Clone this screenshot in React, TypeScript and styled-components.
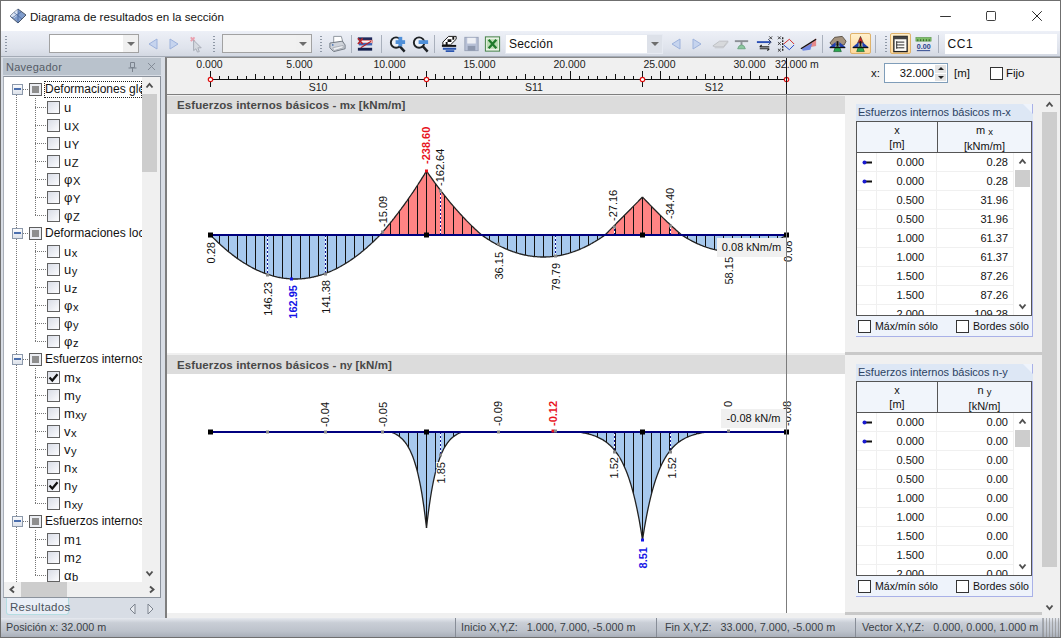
import React from 'react';
import styled, { createGlobalStyle } from 'styled-components';
import { Minus, Square, X } from 'lucide-react';

const GlobalStyle = createGlobalStyle`
  html, body {
    margin: 0;
    padding: 0;
    overflow: hidden;
    background: #f0f0f0;
  }
  * { box-sizing: border-box; }
`;

const FONT = '"Liberation Sans", Arial, sans-serif';

const Window = styled.div`
  width: 1061px;
  height: 638px;
  display: flex;
  flex-direction: column;
  border: 1px solid #6f6f6f;
  border-bottom: none;
  font-family: ${FONT};
  color: #111;
  background: #f0f0f0;
  overflow: hidden;
`;

const TitleBar = styled.div`
  height: 30px;
  flex: none;
  display: flex;
  align-items: center;
  background: #fff;
  padding-left: 8px;
`;

const TitleText = styled.span`
  font-size: 11.6px;
  margin-left: 3px;
  flex: 1;
`;

const WinButton = styled.div`
  width: 46px;
  height: 30px;
  display: flex;
  align-items: center;
  justify-content: center;
  color: #111;
`;

const Toolbar = styled.div`
  height: 26px;
  flex: none;
  display: flex;
  align-items: center;
  padding-left: 3px;
  background: linear-gradient(#edf0f7, #dfe3ec 70%, #d3d8e2);
  border-bottom: 1px solid #a4abb6;
`;

const Grip = styled.div<{ $ml?: number }>`
  width: 3px;
  height: 16px;
  flex: none;
  margin-left: ${p => p.$ml ?? 0}px;
  background: linear-gradient(#8f98a6 50%, transparent 50%) 0 0 / 2px 3px repeat-y;
`;

const ToolSep = styled.div<{ $ml?: number }>`
  width: 1px;
  height: 18px;
  flex: none;
  margin-left: ${p => p.$ml ?? 0}px;
  background: #a9b0bc;
`;

const ToolBtn = styled.div<{ $ml?: number; $active?: boolean }>`
  width: 21px;
  height: 21px;
  flex: none;
  margin-left: ${p => p.$ml ?? 0}px;
  display: flex;
  align-items: center;
  justify-content: center;
  border-radius: 2px;
  border: 1px solid ${p => (p.$active ? '#dfb26a' : 'transparent')};
  background: ${p => (p.$active ? 'linear-gradient(#fff0cc, #ffd99a)' : 'transparent')};
`;

const Combo = styled.div<{ $w: number; $ml?: number; $grey?: boolean; $flat?: boolean }>`
  width: ${p => p.$w}px;
  height: ${p => (p.$flat ? 20 : 19)}px;
  flex: none;
  margin-left: ${p => p.$ml ?? 0}px;
  display: flex;
  align-items: center;
  background: ${p => (p.$grey ? '#f1f1f1' : '#fff')};
  border: 1px solid ${p => (p.$flat ? '#e6eaf2' : '#a2a2a2')};
  font-size: 12px;
  padding-left: ${p => (p.$flat ? 3 : 0)}px;
`;

const ComboText = styled.span`
  flex: 1;
  letter-spacing: 0.2px;
`;

const ComboArrow = styled.div<{ $dark?: boolean }>`
  width: 15px;
  align-self: stretch;
  display: flex;
  align-items: center;
  justify-content: center;
  background: ${p => (p.$dark ? '#dde1e9' : '#f0f0f0')};
  &::after {
    content: '';
    border: 4px solid transparent;
    border-top-color: #6d6d6d;
    border-bottom: none;
  }
`;

const ToolField = styled.div<{ $ml?: number }>`
  width: 112px;
  height: 20px;
  flex: none;
  margin-left: ${p => p.$ml ?? 0}px;
  background: #fff;
  font-size: 12px;
  letter-spacing: 0.6px;
  padding: 3px 0 0 3px;
`;

const Body = styled.div`
  flex: 1;
  display: flex;
  min-height: 0;
`;

const NavPanel = styled.div`
  width: 164px;
  flex: none;
  display: flex;
  flex-direction: column;
  background: #d8dde5;
  padding-top: 1px;
  padding-left: 2px;
`;

const NavHeader = styled.div`
  width: 158px;
  height: 17px;
  flex: none;
  display: flex;
  align-items: center;
  background: #b9c2cc;
  color: #555c66;
  font-size: 11px;
  letter-spacing: 0.25px;
  padding-left: 3px;
`;

const NavTitle = styled.span`
  flex: 1;
`;

const NavIcon = styled.span`
  width: 19px;
  display: flex;
  justify-content: center;
  color: #7b838e;
`;

const NavFrame = styled.div`
  width: 158px;
  height: 522px;
  flex: none;
  margin-top: 1px;
  display: flex;
  flex-direction: column;
  border: 1px solid #8b929c;
  border-left-color: #a9afb8;
  background: #f0f0f0;
`;

const NavTop = styled.div`
  flex: 1;
  display: flex;
  min-height: 0;
`;

const Tree = styled.div`
  width: 138px;
  flex: none;
  overflow: hidden;
  padding-top: 3px;
  background:
    linear-gradient(#fff, #fff) 12px 0 / 1px 12px no-repeat,
    linear-gradient(#777 50%, transparent 50%) 12px 0 / 1px 2px repeat-y,
    #fff;
`;

const GroupRow = styled.div`
  height: 18px;
  display: flex;
  align-items: center;
  padding-left: 8px;
`;

const Expander = styled.div`
  width: 11px;
  height: 11px;
  flex: none;
  background: linear-gradient(#fafbfd, #dde2ea);
  border: 1px solid #8c99ab;
  display: flex;
  align-items: center;
  justify-content: center;
  &::after {
    content: '';
    width: 7px;
    height: 2px;
    background: #4b6fae;
  }
`;

const DotStub = styled.div<{ $w: number }>`
  width: ${p => p.$w}px;
  height: 1px;
  flex: none;
  background: linear-gradient(to right, #777 50%, transparent 50%) 0 0 / 2px 1px repeat-x;
`;

const GroupBox = styled.div`
  width: 13px;
  height: 13px;
  flex: none;
  border: 1px solid #5e5e5e;
  background: #eceef3;
  display: flex;
  align-items: center;
  justify-content: center;
  &::after {
    content: '';
    width: 7px;
    height: 7px;
    background: #8e8e8e;
  }
`;

const GroupLabel = styled.div<{ $focus?: boolean }>`
  flex: 1;
  min-width: 0;
  height: 17px;
  margin-left: 2px;
  padding: 1px 0 0 1px;
  font-size: 12px;
  white-space: nowrap;
  overflow: hidden;
  outline: ${p => (p.$focus ? '1px dotted #222' : 'none')};
  outline-offset: -1px;
`;

const ChildRow = styled.div`
  height: 18px;
  display: flex;
  align-items: center;
  padding-left: 31px;
`;

const Elbow = styled.div<{ $last?: boolean }>`
  width: 12px;
  align-self: stretch;
  flex: none;
  background: linear-gradient(to right, #777 50%, transparent 50%) 0 50% / 2px 1px repeat-x;
  &::before {
    content: '';
    display: block;
    width: 1px;
    height: ${p => (p.$last ? '50%' : '100%')};
    background: linear-gradient(#777 50%, transparent 50%) 0 0 / 1px 2px repeat-y;
  }
`;

const TreeCheck = styled.div`
  width: 13px;
  height: 13px;
  flex: none;
  border: 1px solid #626262;
  background: linear-gradient(135deg, #d9dde7, #fcfcfe);
  display: flex;
  align-items: center;
  justify-content: center;
`;

const ChildLabel = styled.span`
  margin-left: 4px;
  font-size: 13px;
  letter-spacing: 0.5px;
  white-space: nowrap;
`;

const Sub = styled.span`
  font-size: 0.86em;
  vertical-align: -1px;
  letter-spacing: 0;
`;

const VScroll = styled.div`
  width: 15px;
  flex: none;
  display: flex;
  flex-direction: column;
  align-items: center;
  background: #f0f0f0;
`;

const ScrollArrow = styled.div<{ $h?: number }>`
  height: ${p => p.$h ?? 17}px;
  flex: none;
  display: flex;
  align-items: center;
  justify-content: center;
  width: 100%;
`;

const ScrollThumb = styled.div<{ $h: number }>`
  width: 100%;
  height: ${p => p.$h}px;
  flex: none;
  background: #cdcdcd;
`;

const ScrollFill = styled.div`
  flex: 1;
`;

const HScroll = styled.div`
  height: 15px;
  flex: none;
  display: flex;
  align-items: center;
  background: #f0f0f0;
`;

const HArrow = styled.div`
  width: 17px;
  flex: none;
  display: flex;
  justify-content: center;
`;

const HThumb = styled.div`
  width: 46px;
  height: 15px;
  background: #cdcdcd;
`;

const TabBar = styled.div`
  flex: 1;
  display: flex;
  align-items: flex-start;
  padding-left: 3px;
`;

const Tab = styled.div`
  width: 63px;
  height: 17px;
  font-size: 11.5px;
  letter-spacing: 0.3px;
  color: #4b525c;
  background: #e9eef6;
  border: 1px solid #b5dde2;
  border-top: none;
  border-radius: 0 0 3px 3px;
  padding-left: 3px;
  padding-top: 2px;
  line-height: 14px;
`;

const TabArrows = styled.div`
  margin-left: 59px;
  margin-top: 5px;
  display: flex;
  gap: 9px;
`;

const Main = styled.div`
  flex: 1;
  display: flex;
  flex-direction: column;
  min-width: 0;
  border-left: 2px solid #7e7e7e;
  border-top: 1px solid #8a8a8a;
`;

const RulerRow = styled.div`
  height: 37px;
  flex: none;
  display: flex;
  background: #f0f0f0;
  border-bottom: 1px solid #7f7f7f;
`;

const Controls = styled.div`
  flex: 1;
  display: flex;
  align-items: center;
  padding: 0 0 6px 26px;
  font-size: 11.5px;
`;

const ControlLabel = styled.span<{ $ml?: number }>`
  margin-left: ${p => p.$ml ?? 0}px;
`;

const XLabel = styled.span`
  width: 13px;
`;

const SpinInput = styled.div`
  width: 64px;
  height: 20px;
  display: flex;
  align-items: center;
  justify-content: flex-end;
  background: #fff;
  border: 1px solid #7f9db9;
  font-size: 11.2px;
`;

const Spin = styled.div`
  width: 11px;
  height: 16px;
  margin-left: 1px;
  margin-right: 1px;
  display: flex;
  flex-direction: column;
  gap: 1px;
`;

const SpinPart = styled.div<{ $down?: boolean }>`
  flex: 1;
  background: #e4e4e4;
  display: flex;
  align-items: center;
  justify-content: center;
  &::after {
    content: '';
    border: 3px solid transparent;
    ${p => (p.$down ? 'border-top-color: #222; border-bottom: none;' : 'border-bottom-color: #222; border-top: none;')}
  }
`;

const PlainCheck = styled.div<{ $ml?: number }>`
  width: 13px;
  height: 13px;
  flex: none;
  margin-left: ${p => p.$ml ?? 0}px;
  background: #fff;
  border: 1px solid #333;
`;

const Content = styled.div`
  flex: 1;
  display: flex;
  min-height: 0;
`;

const DiagramCol = styled.div`
  width: 678px;
  flex: none;
  position: relative;
  padding-top: 1px;
  background: #f0f0f0;
`;

const Section = styled.div`
  display: flex;
  flex-direction: column;
`;

const SectionHead = styled.div<{ $h: number }>`
  height: ${p => p.$h}px;
  background: #dcdcdc;
  color: #484848;
  font-size: 11.5px;
  font-weight: bold;
  letter-spacing: 0.1px;
  padding-left: 10px;
  display: flex;
  align-items: center;
  white-space: pre;
`;

const SectionBody = styled.div<{ $h: number; $mb?: number }>`
  height: ${p => p.$h}px;
  margin-bottom: ${p => p.$mb ?? 0}px;
  background: #fff;
  position: relative;
  overflow: hidden;
`;

const ChartSvg = styled.svg`
  display: block;
`;

const ChartLabel = styled.text<{ $color?: string; $bold?: boolean; $halo?: boolean }>`
  font-family: ${FONT};
  font-size: 11px;
  fill: ${p => p.$color ?? '#111'};
  font-weight: ${p => (p.$bold ? 'bold' : 'normal')};
  ${p => (p.$halo ? 'stroke: #fff; stroke-width: 2px; paint-order: stroke;' : '')}
`;

const RulerText = styled.text`
  font-family: ${FONT};
  font-size: 10.5px;
  fill: #222;
`;

const Tooltip = styled.div<{ $left: number; $top: number; $w: number }>`
  position: absolute;
  left: ${p => p.$left}px;
  top: ${p => p.$top}px;
  width: ${p => p.$w}px;
  height: 19px;
  background: #f0f0f0;
  font-size: 11px;
  text-align: center;
  line-height: 19px;
  white-space: nowrap;
`;

const CursorLine = styled.div`
  position: absolute;
  left: 619px;
  top: 0;
  bottom: 5px;
  width: 1px;
  background: #7c7c7c;
`;

const SideCol = styled.div`
  width: 197px;
  flex: none;
  display: flex;
  flex-direction: column;
`;

const SidePane = styled.div`
  height: 260px;
  flex: none;
  padding: 9px 0 0 11px;
  border-bottom: 3px solid #c9c9c9;
`;

const Card = styled.div`
  width: 177px;
  height: 233px;
  display: flex;
  flex-direction: column;
  background: #eef3fb;
  border-right: 1px solid #a9b1e8;
  border-bottom: 1px solid #a9b1e8;
`;

const CardTitle = styled.div`
  height: 17px;
  flex: none;
  margin-right: -1px;
  background: #dde7f5;
  clip-path: polygon(0 0, calc(100% - 10px) 0, 100% 10px, 100% 100%, 0 100%);
  color: #2b4262;
  font-size: 11px;
  padding: 2px 0 0 2px;
`;

const DataTable = styled.div`
  height: 195px;
  flex: none;
  display: flex;
  flex-direction: column;
  border: 1px solid #555;
  background: #fff;
`;

const TableHead = styled.div`
  height: 31px;
  flex: none;
  display: grid;
  grid-template-columns: 80px 1fr;
  background: #f1f5fb;
  border-bottom: 1px solid #555;
  font-size: 11px;
`;

const HeadCell = styled.div`
  text-align: center;
  line-height: 14px;
  padding-top: 1px;
  & + & { border-left: 1px solid #555; }
`;

const TableBody = styled.div`
  flex: 1;
  display: flex;
  min-height: 0;
`;

const Rows = styled.div`
  width: 157px;
  flex: none;
  overflow: hidden;
`;

const DataRow = styled.div`
  height: 19px;
  display: grid;
  grid-template-columns: 20px 60px 77px;
  border-bottom: 1px solid #f0f0f0;
  font-size: 11px;
  line-height: 18px;
`;

const MarkCell = styled.div`
  display: flex;
  align-items: center;
  justify-content: center;
  border-right: 1px solid #f0f0f0;
`;

const NumCell = styled.div<{ $pad: number }>`
  text-align: right;
  padding-right: ${p => p.$pad}px;
  border-right: 1px solid #f0f0f0;
`;

const MiniScroll = styled.div`
  flex: 1;
  display: flex;
  flex-direction: column;
  padding: 0 1px;
`;

const CardFooter = styled.div`
  flex: 1;
  display: flex;
  align-items: center;
  padding-left: 2px;
  font-size: 10.6px;
`;

const FooterItem = styled.label<{ $w: number }>`
  width: ${p => p.$w}px;
  display: flex;
  align-items: center;
  gap: 4px;
  white-space: nowrap;
`;

const PageScroll = styled.div`
  flex: 1;
  display: flex;
  flex-direction: column;
  padding-right: 3px;
  padding-top: 1px;
`;

const StatusBar = styled.div`
  height: 20px;
  flex: none;
  display: flex;
  background: linear-gradient(#e6e9ef, #c9ced6 25%, #bcc2cb 70%, #a9afb9);
  border-bottom: 1px solid #6f6f6f;
  font-size: 10.8px;
  color: #3a3f46;
  margin: 0 -1px;
`;

const StatusCell = styled.div<{ $w: number; $pad: number }>`
  width: ${p => p.$w}px;
  flex: none;
  padding: 3px 0 0 ${p => p.$pad}px;
  white-space: pre;
  & + & { border-left: 1px solid #878d97; }
`;

const GripDots = styled.div`
  flex: 1;
  border-left: 1px solid #878d97;
  background: linear-gradient(to right, #888 50%, transparent 50%) right bottom / 3px 3px;
  background-repeat: repeat;
  opacity: 0.6;
`;

const Chevron = ({ dir, size = 9 }: { dir: 'up' | 'down' | 'left' | 'right'; size?: number }) => {
  const pts = {
    up: '1.5,6.5 4.5,3 7.5,6.5',
    down: '1.5,2.5 4.5,6 7.5,2.5',
    left: '6,1.5 2.5,4.5 6,7.5',
    right: '3,1.5 6.5,4.5 3,7.5',
  }[dir];
  return (
    <svg width={size} height={size} viewBox="0 0 9 9">
      <polyline points={pts} fill="none" stroke="#505050" strokeWidth="1.9" />
    </svg>
  );
};

const Tri = ({ left, size = 16 }: { left?: boolean; size?: number }) => (
  <svg width={size} height={size} viewBox="0 0 16 16">
    <polygon points={left ? '12,3 12,13 4,8' : '4,3 4,13 12,8'} fill="#c6d4ee" stroke="#9db2dc" />
  </svg>
);

const OutlineTri = ({ left }: { left?: boolean }) => (
  <svg width="9" height="12" viewBox="0 0 9 12">
    <polygon points={left ? '7,1 7,11 2,6' : '2,1 2,11 7,6'} fill="#e8ebf0" stroke="#7c838e" />
  </svg>
);

const Ico = ({ children }: { children: React.ReactNode }) => (
  <svg width="20" height="20" viewBox="0 0 20 20">{children}</svg>
);

const AppIcon = () => (
  <svg width="18" height="16" viewBox="0 0 18 16">
    <polygon points="1,8 9,1 17,7 9,15" fill="#7f9ccb" stroke="#4b5668" />
    <polygon points="1,8 9,1 9,7 5,10" fill="#d8e2f2" />
    <path d="M5 4.5 L13 11 M9 1 L9 15 M3 10 L12 4" stroke="#3f5f95" strokeWidth="0.7" />
  </svg>
);

const PinIcon = () => (
  <Ico>
    <path d="M5 3 L9 7 M9 3 L5 7" stroke="#eaa0ae" strokeWidth="2" />
    <polygon points="8,6 16,14 12.5,14 14,18 12,18.5 10.5,15 8,17" fill="#d6dae0" stroke="#a5abb5" />
  </Ico>
);

const PrintIcon = () => (
  <Ico>
    <polygon points="6,2 14,2 16,9 6,9" fill="#fff" stroke="#8d939c" />
    <polygon points="2,9 15,7 18,11 18,15 6,18 2,14" fill="#cfd3da" stroke="#6f7680" />
    <polygon points="5,14 16,11.5 16,14 6,17" fill="#eef0f3" stroke="#8a909a" strokeWidth="0.6" />
    <circle cx="5" cy="11" r="0.9" fill="#4a75b5" />
  </Ico>
);

const StripesIcon = () => (
  <Ico>
    <rect x="2" y="3" width="15" height="3" fill="#1f2a5c" />
    <rect x="4" y="6" width="13" height="3" fill="#f5f5f5" stroke="#c33" strokeWidth="0.6" />
    <rect x="3" y="9" width="14" height="2.5" fill="#3c63b5" />
    <path d="M2 4 L7 10 M7 4 L2 10" stroke="#b5222a" strokeWidth="1.6" />
    <path d="M16 7 L5 14" stroke="#b5222a" strokeWidth="1.2" />
    <rect x="2" y="14" width="15" height="3" fill="#15214f" />
  </Ico>
);

const ZoomIcon = ({ plus }: { plus?: boolean }) => (
  <Ico>
    <circle cx="8.5" cy="8.5" r="5.5" fill="#eef2f8" stroke="#1e2226" strokeWidth="2" />
    <path d="M12.5 12.5 L17.5 18" stroke="#1e2226" strokeWidth="2.6" />
    <rect x="8" y="6" width="10" height="4" fill="#4f8fd8" />
    {plus && <rect x="11" y="2.5" width="4" height="10" fill="#4f8fd8" />}
  </Ico>
);

const CheckerIcon = () => (
  <Ico>
    <polygon points="3,8 9,2 17,2 17,5 11,11 3,11" fill="#fff" stroke="#111" />
    <path d="M6 8 h2 v3 h-2z M10 5 h2 v3 h-2z M13 2.5 h2 v3 h-2z M8 5 h2 v3 h-2z" fill="#111" />
    <rect x="2" y="11" width="15" height="2" fill="#111" />
    <path d="M3 15 H17 M6 17.5 H15" stroke="#2a55b0" strokeWidth="2" />
  </Ico>
);

const SaveIcon = () => (
  <Ico>
    <rect x="3" y="3" width="14" height="14" fill="#b7c0d6" stroke="#9aa3b8" />
    <rect x="5.5" y="3.5" width="9" height="6" fill="#eef0f5" />
    <rect x="6" y="12" width="8" height="5" fill="#8e98ae" />
  </Ico>
);

const ExcelIcon = () => (
  <Ico>
    <rect x="2.5" y="2.5" width="15" height="15" fill="#e9f3e6" stroke="#3f7d41" />
    <rect x="4" y="5" width="12" height="10" fill="#bcdcb5" />
    <path d="M6 5.5 L14 14.5 M14 5.5 L6 14.5" stroke="#1f7a2b" strokeWidth="2.4" />
  </Ico>
);

const PlateIcon = () => (
  <Ico>
    <polygon points="2,12 9,7 18,7 13,13 4,13" fill="#d7d9dc" stroke="#bdbfc3" />
    <path d="M4 14 L13 14 L18 8" stroke="#c4c6ca" fill="none" />
  </Ico>
);

const BellIcon = () => (
  <Ico>
    <rect x="3" y="6" width="14" height="2" fill="#8c9096" />
    <rect x="9" y="8" width="2" height="4" fill="#8c9096" />
    <path d="M6 15 Q7 11 10 11 Q13 11 14 15 Z" fill="#8cc7a0" stroke="#6fa884" />
  </Ico>
);

const SwapIcon = () => (
  <Ico>
    <path d="M2 8 H16" stroke="#2b4fb5" strokeWidth="2" />
    <path d="M14 5 L17 8 L14 11" fill="none" stroke="#1d2b55" />
    <path d="M15 2 l3 3 M18 2 l-3 3" stroke="#333" />
    <path d="M5 13 H15 M5 13 l2 -2 M15 15 H5 M15 15 l-2 2" stroke="#222" strokeWidth="1.3" fill="none" />
  </Ico>
);

const CrossLinesIcon = () => (
  <Ico>
    <path d="M1 2 l3 3 M4 2 l-3 3 M1 8 l3 3 M4 8 l-3 3 M1 15 l3 3 M4 15 l-3 3" stroke="#333" />
    <path d="M6 3 V17" stroke="#222" strokeDasharray="2 1" strokeWidth="1.4" />
    <path d="M7 10 L13 5 L18 10" stroke="#d32424" fill="none" />
    <path d="M7 11 L13 16 L18 11" stroke="#2448c8" fill="none" />
  </Ico>
);

const SlopeIcon = () => (
  <Ico>
    <polygon points="3,15 18,4 18,12" fill="#e58a8a" />
    <polygon points="3,15 14,9 12,16 4,17" fill="#6f86e0" />
    <path d="M2 15 L18 5" stroke="#111" strokeWidth="1.5" />
  </Ico>
);

const HouseIcon = ({ stone }: { stone?: boolean }) => (
  <Ico>
    {stone ? (
      <polygon points="2,9 7,3 15,2 19,7 17,11 4,11" fill="#a4937f" stroke="#5a5045" />
    ) : (
      <polygon points="10,2 13,9 7,9" fill="#d8261f" stroke="#222" strokeWidth="0.6" />
    )}
    <polygon points="1,14 8,8 8,13" fill="#1f3fb0" />
    <polygon points="19,14 12,8 12,13" fill="#1f3fb0" />
    <rect x="9" y="7" width="2" height="6" fill="#111" />
    <path d="M6 18 Q7 12.5 10 12.5 Q13 12.5 14 18 Z" fill="#2aa84e" stroke="#135c2a" strokeWidth="0.7" />
    <rect x="2" y="13" width="16" height="1.4" fill="#111" />
  </Ico>
);

const ListIcon = () => (
  <Ico>
    <rect x="3" y="2" width="14" height="16" fill="#fbfbf7" stroke="#222" strokeWidth="1.4" />
    <rect x="3" y="2" width="14" height="3" fill="#444" />
    <path d="M6 7 V15 M6 8 H14 M8 11 H14 M8 14 H14 M6 11 H8 M6 14 H8" stroke="#222" />
  </Ico>
);

const GaugeText = styled.text`
  font-family: ${FONT};
  font-size: 7.5px;
  font-weight: bold;
  fill: #26408a;
`;

const GaugeIcon = () => (
  <Ico>
    <rect x="2" y="3" width="16" height="4" fill="#7fbf68" stroke="#58934a" strokeWidth="0.6" />
    <path d="M4 5 V7 M7 5 V7 M10 5 V7 M13 5 V7 M16 5 V7" stroke="#2f5b28" />
    <GaugeText x="3" y="15">0.00</GaugeText>
    <path d="M3 17 H17" stroke="#26408a" />
  </Ico>
);

const Tick = () => (
  <svg width="11" height="11" viewBox="0 0 11 11">
    <polyline points="1.5,5.5 4.3,8.5 9.5,2.2" fill="none" stroke="#111" strokeWidth="2.2" />
  </svg>
);

const RowMark = () => (
  <svg width="10" height="5" viewBox="0 0 10 5">
    <rect x="3" y="1.5" width="7" height="2" fill="#111" />
    <circle cx="2.5" cy="2.5" r="2" fill="#1b1bd0" />
  </svg>
);

type TreeItem = { main: string; sub?: string; checked?: boolean };
type TreeGroup = { label: string; items: TreeItem[] };

const tree: TreeGroup[] = [
  {
    label: 'Deformaciones globales',
    items: [
      { main: 'u' },
      { main: 'u', sub: 'X' },
      { main: 'u', sub: 'Y' },
      { main: 'u', sub: 'Z' },
      { main: 'φ', sub: 'X' },
      { main: 'φ', sub: 'Y' },
      { main: 'φ', sub: 'Z' },
    ],
  },
  {
    label: 'Deformaciones locales',
    items: [
      { main: 'u', sub: 'x' },
      { main: 'u', sub: 'y' },
      { main: 'u', sub: 'z' },
      { main: 'φ', sub: 'x' },
      { main: 'φ', sub: 'y' },
      { main: 'φ', sub: 'z' },
    ],
  },
  {
    label: 'Esfuerzos internos básicos',
    items: [
      { main: 'm', sub: 'x', checked: true },
      { main: 'm', sub: 'y' },
      { main: 'm', sub: 'xy' },
      { main: 'v', sub: 'x' },
      { main: 'v', sub: 'y' },
      { main: 'n', sub: 'x' },
      { main: 'n', sub: 'y', checked: true },
      { main: 'n', sub: 'xy' },
    ],
  },
  {
    label: 'Esfuerzos internos principales',
    items: [
      { main: 'm', sub: '1' },
      { main: 'm', sub: '2' },
      { main: 'α', sub: 'b' },
    ],
  },
];

const X0 = 210.5;
const STEP = 9;
const barXs = Array.from({ length: 65 }, (_, i) => X0 + i * STEP);

type CurveFn = (x: number) => number;

const seg = (x0: number, y0: number, x1: number, y1: number, bow: number): CurveFn => x => {
  const t = (x - x0) / (x1 - x0);
  return y0 + (y1 - y0) * t + bow * 4 * t * (1 - t);
};

// exponential cusp, pulled down so it reaches the base line at distance r
const spike = (c: number, depth: number, k: number, r: number, base: number): CurveFn => x => {
  const edge = Math.exp(-r / k);
  return base + (depth * (Math.exp(-Math.abs(x - c) / k) - edge)) / (1 - edge);
};

type Band = { x0: number; x1: number; f: CurveFn; fill: string };

const BLUE = '#a7c9ee';
const RED = '#ff8484';

const mxBands: Band[] = [
  { x0: 210.5, x1: 380, f: seg(210.5, 235, 380, 235, 44), fill: BLUE },
  { x0: 380, x1: 426.5, f: seg(380, 235, 426.5, 171, 3), fill: RED },
  { x0: 426.5, x1: 481.7, f: seg(426.5, 171, 481.7, 235, 4), fill: RED },
  { x0: 481.7, x1: 605, f: seg(481.7, 235, 605, 235, 22), fill: BLUE },
  { x0: 605, x1: 642.5, f: seg(605, 235, 642.5, 197, 0), fill: RED },
  { x0: 642.5, x1: 681.7, f: seg(642.5, 197, 681.7, 235, 1), fill: RED },
  { x0: 681.7, x1: 786.5, f: seg(681.7, 235, 786.5, 235, 17), fill: BLUE },
];

const nyBands: Band[] = [
  { x0: 391, x1: 426.5, f: spike(426.5, 96, 11, 35.5, 432), fill: BLUE },
  { x0: 426.5, x1: 462, f: spike(426.5, 96, 11, 35.5, 432), fill: BLUE },
  { x0: 578, x1: 642.5, f: spike(642.5, 108, 16.6, 64.5, 432), fill: BLUE },
  { x0: 642.5, x1: 707, f: spike(642.5, 108, 16.6, 64.5, 432), fill: BLUE },
];

type Label = {
  t: string;
  x: number;
  y: number;
  end?: boolean;
  color?: string;
  bold?: boolean;
  halo?: boolean;
};

const mxLabels: Label[] = [
  { t: '0.28', x: 215, y: 242, end: true },
  { t: '146.23', x: 272, y: 282, end: true },
  { t: '162.95', x: 296.5, y: 285, end: true, color: '#1414e6', bold: true },
  { t: '141.38', x: 330, y: 280, end: true },
  { t: '-15.09', x: 387, y: 227 },
  { t: '-238.60', x: 430, y: 164, color: '#e8141e', bold: true },
  { t: '-162.64', x: 444, y: 186, halo: true },
  { t: '36.15', x: 503, y: 252, end: true },
  { t: '79.79', x: 560, y: 263, end: true },
  { t: '-27.16', x: 617, y: 221 },
  { t: '-34.40', x: 674, y: 219 },
  { t: '58.15', x: 733, y: 257, end: true },
  { t: '0.08', x: 791.5, y: 262 },
];

const nyLabels: Label[] = [
  { t: '-0.04', x: 329, y: 427 },
  { t: '-0.05', x: 386.5, y: 427 },
  { t: '-0.09', x: 501.7, y: 426 },
  { t: '-0.12', x: 556.7, y: 426, color: '#e8141e', bold: true },
  { t: '0', x: 731.6, y: 407 },
  { t: '-0.08', x: 790.7, y: 426 },
  { t: '1.85', x: 445, y: 462, end: true, halo: true },
  { t: '1.52', x: 618, y: 457, end: true, halo: true },
  { t: '1.52', x: 675.7, y: 457, end: true, halo: true },
  { t: '8.51', x: 647, y: 547, end: true, color: '#1414e6', bold: true },
];

type Dot = { x: number; y: number; c?: string };

const Diagram = ({
  top,
  height,
  base,
  bands,
  dashes,
  dots,
  labels,
}: {
  top: number;
  height: number;
  base: number;
  bands: Band[];
  dashes: { x: number; y: number }[];
  dots: Dot[];
  labels: Label[];
}) => {
  const inBand = (x: number) => bands.find(b => x >= b.x0 && x <= b.x1);
  return (
    <ChartSvg width={678} height={height} viewBox={`167 ${top} 678 ${height}`}>
      {bands.map((b, i) => {
        const pts: string[] = [`${b.x0},${base}`];
        for (let x = b.x0; x < b.x1; x += 1) pts.push(`${x},${b.f(x).toFixed(1)}`);
        pts.push(`${b.x1},${b.f(b.x1).toFixed(1)}`, `${b.x1},${base}`);
        return <polygon key={i} points={pts.join(' ')} fill={b.fill} />;
      })}
      {barXs.map(x => {
        const b = inBand(x);
        if (!b) return null;
        const y = b.f(x);
        if (Math.abs(y - base) < 1.5) return null;
        return <line key={x} x1={x} x2={x} y1={base} y2={y} stroke="#111" strokeWidth="1" />;
      })}
      {dashes.map(d => (
        <g key={d.x}>
          <line x1={d.x} x2={d.x} y1={base} y2={d.y} stroke="#fff" />
          <line x1={d.x} x2={d.x} y1={base} y2={d.y} stroke="#101090" strokeDasharray="2 2" />
        </g>
      ))}
      {bands.map((b, i) => {
        const pts: string[] = [];
        for (let x = b.x0; x < b.x1; x += 1) pts.push(`${x},${b.f(x).toFixed(1)}`);
        pts.push(`${b.x1},${b.f(b.x1).toFixed(1)}`);
        return <polyline key={i} points={pts.join(' ')} fill="none" stroke="#222" strokeWidth="1.3" />;
      })}
      <line x1={210} x2={787} y1={base} y2={base} stroke="#00007f" strokeWidth="2" />
      {[210.5, 426.5, 642.5, 786.5].map(x => (
        <rect key={x} x={x - 2.5} y={base - 2.5} width={5} height={5} fill="#000" />
      ))}
      {dots.map((d, i) => (
        <rect key={i} x={d.x - 1.5} y={d.y - 1.5} width={3} height={3} fill={d.c ?? '#888'} />
      ))}
      {labels.map(l => (
        <ChartLabel
          key={l.t + l.x}
          x={l.x}
          y={l.y}
          transform={`rotate(-90 ${l.x} ${l.y})`}
          textAnchor={l.end ? 'end' : 'start'}
          $color={l.color}
          $bold={l.bold}
          $halo={l.halo}
        >
          {l.t}
        </ChartLabel>
      ))}
    </ChartSvg>
  );
};

const Ruler = () => {
  const ticks = Array.from({ length: 65 }, (_, i) => i);
  return (
    <svg width={678} height={36} viewBox="167 58 678 36" style={{ display: 'block', flex: 'none' }}>
      {[0, 5, 10, 15, 20, 25, 30].map(m => (
        <RulerText key={m} x={X0 + m * 18 - 1} y={68} textAnchor="middle">
          {m.toFixed(3)}
        </RulerText>
      ))}
      <RulerText x={775} y={68}>32.000 m</RulerText>
      <line x1={210} x2={787} y1={79.5} y2={79.5} stroke="#111" />
      {ticks.map(i => {
        const h = i % 10 === 0 ? 8 : i % 5 === 0 ? 5 : 3;
        const x = X0 + i * STEP;
        return <line key={i} x1={x} x2={x} y1={79} y2={79 - h} stroke="#111" />;
      })}
      {[0, 12, 24, 32].map(m => {
        const x = X0 + m * 18;
        return (
          <g key={m}>
            <line x1={x} x2={x} y1={71} y2={87} stroke="#111" />
            <circle cx={x} cy={79.5} r={2.2} fill="#fff" stroke="#e01010" strokeWidth="1.2" />
          </g>
        );
      })}
      <line x1={786.5} x2={786.5} y1={58} y2={94} stroke="#111" />
      <RulerText x={318} y={91} textAnchor="middle">S10</RulerText>
      <RulerText x={534} y={91} textAnchor="middle">S11</RulerText>
      <RulerText x={714} y={91} textAnchor="middle">S12</RulerText>
    </svg>
  );
};

type ResultRow = [string, string];

const mxRows: ResultRow[] = [
  ['0.000', '0.28'],
  ['0.000', '0.28'],
  ['0.500', '31.96'],
  ['0.500', '31.96'],
  ['1.000', '61.37'],
  ['1.000', '61.37'],
  ['1.500', '87.26'],
  ['1.500', '87.26'],
  ['2.000', '109.28'],
];

const nyRows: ResultRow[] = mxRows.map(r => [r[0], '0.00']);

const ResultCard = ({
  title,
  symbol,
  sub,
  unit,
  rows,
}: {
  title: string;
  symbol: string;
  sub: string;
  unit: string;
  rows: ResultRow[];
}) => (
  <Card>
    <CardTitle>{title}</CardTitle>
    <DataTable>
      <TableHead>
        <HeadCell>
          x
          <br />
          [m]
        </HeadCell>
        <HeadCell>
          {symbol} <Sub>{sub}</Sub>
          <br />
          {unit}
        </HeadCell>
      </TableHead>
      <TableBody>
        <Rows>
          {rows.map((r, i) => (
            <DataRow key={i}>
              <MarkCell>{i < 2 && <RowMark />}</MarkCell>
              <NumCell $pad={12}>{r[0]}</NumCell>
              <NumCell $pad={5}>{r[1]}</NumCell>
            </DataRow>
          ))}
        </Rows>
        <MiniScroll>
          <ScrollArrow $h={17}><Chevron dir="up" /></ScrollArrow>
          <ScrollThumb $h={17} />
          <ScrollFill />
          <ScrollArrow $h={17}><Chevron dir="down" /></ScrollArrow>
        </MiniScroll>
      </TableBody>
    </DataTable>
    <CardFooter>
      <FooterItem $w={98}><PlainCheck />Máx/mín sólo</FooterItem>
      <FooterItem $w={72}><PlainCheck />Bordes sólo</FooterItem>
    </CardFooter>
  </Card>
);

const App: React.FC = () => (
  <Window>
    <GlobalStyle />
    <TitleBar>
      <AppIcon />
      <TitleText>Diagrama de resultados en la sección</TitleText>
      <WinButton><Minus size={17} strokeWidth={1.2} /></WinButton>
      <WinButton><Square size={12} strokeWidth={1.6} /></WinButton>
      <WinButton><X size={18} strokeWidth={1.2} /></WinButton>
    </TitleBar>

    <Toolbar>
      <Grip $ml={1} />
      <Combo $w={90} $ml={41}><ComboText /><ComboArrow /></Combo>
      <ToolBtn $ml={3.5}><Tri left /></ToolBtn>
      <ToolBtn><Tri /></ToolBtn>
      <ToolBtn><PinIcon /></ToolBtn>
      <Grip $ml={7} />
      <Combo $w={90} $ml={6} $grey><ComboText /><ComboArrow /></Combo>
      <Grip $ml={8} />
      <ToolBtn $ml={4}><PrintIcon /></ToolBtn>
      <ToolSep $ml={3} />
      <ToolBtn $ml={3}><StripesIcon /></ToolBtn>
      <ToolSep $ml={5} />
      <ToolBtn $ml={5}><ZoomIcon plus /></ToolBtn>
      <ToolBtn $ml={2}><ZoomIcon /></ToolBtn>
      <ToolSep $ml={3} />
      <ToolBtn $ml={4}><CheckerIcon /></ToolBtn>
      <ToolBtn $ml={1}><SaveIcon /></ToolBtn>
      <ToolBtn><ExcelIcon /></ToolBtn>
      <Combo $w={158} $ml={2.5} $flat>
        <ComboText>Sección</ComboText>
        <ComboArrow $dark />
      </Combo>
      <ToolBtn $ml={2.5}><Tri left /></ToolBtn>
      <ToolBtn><Tri /></ToolBtn>
      <ToolBtn $ml={2}><PlateIcon /></ToolBtn>
      <ToolBtn><BellIcon /></ToolBtn>
      <ToolBtn $ml={2}><SwapIcon /></ToolBtn>
      <ToolBtn $ml={1}><CrossLinesIcon /></ToolBtn>
      <ToolBtn $ml={1}><SlopeIcon /></ToolBtn>
      <ToolSep $ml={3.5} />
      <ToolBtn $ml={3.5}><HouseIcon stone /></ToolBtn>
      <ToolBtn $ml={2} $active><HouseIcon /></ToolBtn>
      <ToolSep $ml={4} />
      <Grip $ml={9} />
      <ToolBtn $ml={2.5} $active><ListIcon /></ToolBtn>
      <ToolBtn $ml={2}><GaugeIcon /></ToolBtn>
      <ToolSep $ml={4} />
      <ToolField $ml={5.5}>CC1</ToolField>
    </Toolbar>

    <Body>
      <NavPanel>
        <NavHeader>
          <NavTitle>Navegador</NavTitle>
          <NavIcon>
            <svg width="11" height="12" viewBox="0 0 11 12">
              <path d="M3.5 1.5 H7.5 V6.5 H3.5 Z M1.5 7 H9.5 M5.5 7 V11" fill="none" stroke="#7b838e" />
            </svg>
          </NavIcon>
          <NavIcon><X size={13} strokeWidth={1.6} /></NavIcon>
        </NavHeader>
        <NavFrame>
          <NavTop>
            <Tree>
              {tree.map((g, gi) => (
                <React.Fragment key={g.label}>
                  <GroupRow>
                    <Expander />
                    <DotStub $w={6} />
                    <GroupBox />
                    <GroupLabel $focus={gi === 0}>{g.label}</GroupLabel>
                  </GroupRow>
                  {g.items.map((it, i) => (
                    <ChildRow key={it.main + (it.sub ?? '')}>
                      <Elbow $last={i === g.items.length - 1} />
                      <TreeCheck>{it.checked && <Tick />}</TreeCheck>
                      <ChildLabel>
                        {it.main}
                        {it.sub && <Sub>{it.sub}</Sub>}
                      </ChildLabel>
                    </ChildRow>
                  ))}
                </React.Fragment>
              ))}
            </Tree>
            <VScroll>
              <ScrollArrow><Chevron dir="up" /></ScrollArrow>
              <ScrollThumb $h={78} />
              <ScrollFill />
              <ScrollArrow><Chevron dir="down" /></ScrollArrow>
            </VScroll>
          </NavTop>
          <HScroll>
            <HArrow><Chevron dir="left" /></HArrow>
            <HThumb />
            <ScrollFill />
            <HArrow><Chevron dir="right" /></HArrow>
          </HScroll>
        </NavFrame>
        <TabBar>
          <Tab>Resultados</Tab>
          <TabArrows>
            <OutlineTri left />
            <OutlineTri />
          </TabArrows>
        </TabBar>
      </NavPanel>

      <Main>
        <RulerRow>
          <Ruler />
          <Controls>
            <XLabel>x:</XLabel>
            <SpinInput>
              32.000
              <Spin>
                <SpinPart />
                <SpinPart $down />
              </Spin>
            </SpinInput>
            <ControlLabel $ml={6}>[m]</ControlLabel>
            <PlainCheck $ml={20} />
            <ControlLabel $ml={3}>Fijo</ControlLabel>
          </Controls>
        </RulerRow>

        <Content>
          <DiagramCol>
            <Section>
              <SectionHead $h={18}>
                Esfuerzos internos básicos - m<Sub>x</Sub> [kNm/m]
              </SectionHead>
              <SectionBody $h={239} $mb={2}>
                <Diagram
                  top={114}
                  height={239}
                  base={235}
                  bands={mxBands}
                  dashes={[
                    { x: 267.5, y: 274 },
                    { x: 325.5, y: 274 },
                    { x: 440.5, y: 191 },
                    { x: 555.5, y: 256 },
                    { x: 614.5, y: 228 },
                    { x: 670.5, y: 226 },
                  ]}
                  dots={[
                    { x: 267.5, y: 275 },
                    { x: 291.5, y: 279, c: '#1414e6' },
                    { x: 325.5, y: 274 },
                    { x: 382.5, y: 232 },
                    { x: 426.5, y: 171, c: '#e8141e' },
                    { x: 440.5, y: 191 },
                    { x: 498.5, y: 244 },
                    { x: 555.5, y: 256 },
                    { x: 614.5, y: 227 },
                    { x: 670.5, y: 226 },
                  ]}
                  labels={mxLabels}
                />
                <Tooltip $left={550} $top={124} $w={69}>0.08 kNm/m</Tooltip>
              </SectionBody>
            </Section>
            <Section>
              <SectionHead $h={19}>
                Esfuerzos internos básicos - n<Sub>y</Sub> [kN/m]
              </SectionHead>
              <SectionBody $h={239}>
                <Diagram
                  top={374}
                  height={239}
                  base={432}
                  bands={nyBands}
                  dashes={[
                    { x: 440.5, y: 455 },
                    { x: 614.5, y: 452 },
                    { x: 670.5, y: 452 },
                  ]}
                  dots={[
                    { x: 267.5, y: 432 },
                    { x: 325.5, y: 432 },
                    { x: 382.5, y: 432 },
                    { x: 440.5, y: 455 },
                    { x: 498.5, y: 432 },
                    { x: 553, y: 431, c: '#e8141e' },
                    { x: 555.5, y: 431 },
                    { x: 614.5, y: 452 },
                    { x: 642.5, y: 540, c: '#1414e6' },
                    { x: 670.5, y: 452 },
                    { x: 728.5, y: 431 },
                  ]}
                  labels={nyLabels}
                />
                <Tooltip $left={554} $top={35} $w={65}>-0.08 kN/m</Tooltip>
              </SectionBody>
            </Section>
            <CursorLine />
          </DiagramCol>

          <SideCol>
            <SidePane>
              <ResultCard
                title="Esfuerzos internos básicos m-x"
                symbol="m"
                sub="x"
                unit="[kNm/m]"
                rows={mxRows}
              />
            </SidePane>
            <SidePane>
              <ResultCard
                title="Esfuerzos internos básicos n-y"
                symbol="n"
                sub="y"
                unit="[kN/m]"
                rows={nyRows}
              />
            </SidePane>
          </SideCol>

          <PageScroll>
            <ScrollArrow $h={16}><Chevron dir="up" /></ScrollArrow>
            <ScrollThumb $h={455} />
            <ScrollFill />
            <ScrollArrow $h={22}><Chevron dir="down" /></ScrollArrow>
          </PageScroll>
        </Content>
      </Main>
    </Body>

    <StatusBar>
      <StatusCell $w={455} $pad={6}>Posición x: 32.000 m</StatusCell>
      <StatusCell $w={201} $pad={5}>Inicio X,Y,Z:   1.000, 7.000, -5.000 m</StatusCell>
      <StatusCell $w={199} $pad={8}>Fin X,Y,Z:   33.000, 7.000, -5.000 m</StatusCell>
      <StatusCell $w={187} $pad={6}>Vector X,Y,Z:   0.000, 0.000, 1.000 m</StatusCell>
      <GripDots />
    </StatusBar>
  </Window>
);

export default App;
